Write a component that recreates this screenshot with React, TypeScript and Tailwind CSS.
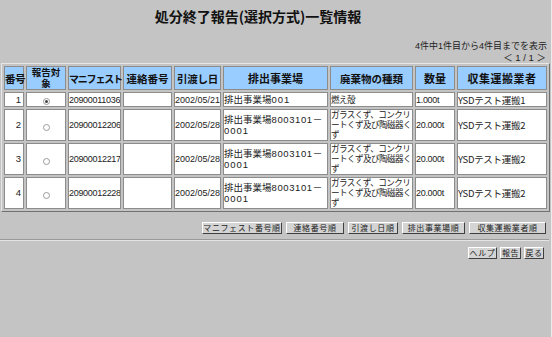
import React from 'react';

const jp = { fontFamily: '"Noto Sans CJK JP", "Liberation Sans", sans-serif' };
// Liberation first keeps the line box compact for stacked multi-line cells
const lat = { fontFamily: '"Liberation Sans", "Noto Sans CJK JP", sans-serif' };
const num = { fontFamily: '"Liberation Sans", Arial, sans-serif' };

type Row = {
  no: number;
  checked: boolean;
  manifest: string;
  date: string;
  site: React.ReactNode;
  waste: string[];
  qty: string;
  carrier: string;
};

const glass = ['ガラスくず、コンクリ', 'ートくず及び陶磁器く', 'ず'];
const siteLong = (
  <>
    <div>
      排出事業場<span className="tracking-[0.6px]">8003101</span>－
    </div>
    <div className="tracking-[1px]">0001</div>
  </>
);

const rows: Row[] = [
  {
    no: 1,
    checked: true,
    manifest: '20900011036',
    date: '2002/05/21',
    site: (
      <>
        排出事業場<span className="tracking-[1px]">001</span>
      </>
    ),
    waste: ['燃え殻'],
    qty: '1.000t',
    carrier: 'YSDテスト運搬1',
  },
  { no: 2, checked: false, manifest: '20900012206', date: '2002/05/28', site: siteLong, waste: glass, qty: '20.000t', carrier: 'YSDテスト運搬2' },
  { no: 3, checked: false, manifest: '20900012217', date: '2002/05/28', site: siteLong, waste: glass, qty: '20.000t', carrier: 'YSDテスト運搬2' },
  { no: 4, checked: false, manifest: '20900012228', date: '2002/05/28', site: siteLong, waste: glass, qty: '20.000t', carrier: 'YSDテスト運搬2' },
];

const headers = [
  { label: '番号', w: 'w-[20px]', t: 'text-[10.5px] tracking-[-0.5px]' },
  { label: '報告対象', w: 'w-[40px]', t: 'text-[9.5px]' },
  { label: 'マニフェスト', w: 'w-[53px]', t: 'text-[10px] tracking-[-1.2px]' },
  { label: '連絡番号', w: 'w-[49px]', t: 'text-[10.5px]' },
  { label: '引渡し日', w: 'w-[47px]', t: 'text-[10.5px] tracking-[-0.3px]' },
  { label: '排出事業場', w: 'w-[105px]', t: 'text-[11px]' },
  { label: '廃棄物の種類', w: 'w-[83px]', t: 'text-[10.5px]' },
  { label: '数量', w: 'w-[40px]', t: 'text-[11px]' },
  { label: '収集運搬業者', w: 'w-[90px]', t: 'text-[11px] tracking-[0.5px]' },
];

function Radio({ checked }: { checked: boolean }) {
  return (
    <span className="inline-flex w-[7px] h-[7px] rounded-full border border-[#9a9a9a] bg-white items-center justify-center align-middle">
      {checked && <span className="w-[3px] h-[3px] rounded-full bg-[#444]" />}
    </span>
  );
}

function Btn({ label, w }: { label: string; w: string }) {
  return (
    <button
      className={`${w} h-[12px] bg-[#d4d4d4] border border-t-white border-l-white border-b-[#404040] border-r-[#404040] text-[8px] leading-[10px] tracking-[0.6px] text-[#222] flex items-center justify-center whitespace-nowrap`}
      style={jp}
    >
      {label}
    </button>
  );
}

// base cell style: no font size / leading here, each cell sets its own
const td = 'border border-[#8c8c8c] bg-white p-0 align-middle text-[#222] overflow-hidden';

export default function App() {
  return (
    <div className="w-[552px] h-[337px] bg-[#c4c4c4] border-r border-[#ececec] overflow-hidden" style={jp}>
      {/* Title */}
      <div className="pt-[8px] pr-[35px] flex justify-center">
        <h1 className="text-[14px] leading-[16px] font-bold text-[#111]">処分終了報告(選択方式)一覧情報</h1>
      </div>

      {/* Count / paging */}
      <div className="mt-[17px] pr-[4px] text-right text-[9px] leading-[11px] text-[#222]" style={lat}>
        <div>4件中1件目から4件目までを表示</div>
        <div className="text-[9.5px] pr-[1px] whitespace-pre">＜ 1 / 1 ＞</div>
      </div>

      {/* Table */}
      <table className="w-[549px] ml-[1px] table-fixed border-separate border-spacing-[2px] border border-t-[#e6e6e6] border-l-[#e6e6e6] border-b-[#707070] border-r-[#707070]">
        <thead>
          <tr className="h-[23px]">
            {headers.map((h) => (
              <th
                key={h.label}
                className={`${h.w} ${h.t} border border-[#8c8c8c] bg-[#99ccff] p-0 leading-[11px] font-bold text-[#111] text-center align-middle whitespace-nowrap`}
                style={h.label === '報告対象' ? lat : jp}
              >
                {h.label === '報告対象' ? (
                  <>
                    報告対
                    <br />象
                  </>
                ) : (
                  h.label
                )}
              </th>
            ))}
          </tr>
        </thead>
        <tbody>
          {rows.map((r) => (
            <tr key={r.no} className={r.no === 1 ? 'h-[15px]' : 'h-[32px]'}>
              <td className={`${td} text-[9.5px] leading-[10px] text-right pr-[2px]`} style={num}>
                {r.no}
              </td>
              <td className={`${td} leading-[10px] text-center`}>
                <Radio checked={r.checked} />
              </td>
              <td className={`${td} text-[9px] leading-[10px] tracking-[-0.3px] whitespace-nowrap`} style={num}>
                {r.manifest}
              </td>
              <td className={td} />
              <td className={`${td} text-[9px] leading-[10px] whitespace-nowrap`} style={num}>
                {r.date}
              </td>
              <td className={`${td} text-[9.5px] leading-[11px] whitespace-nowrap`} style={lat}>
                {r.site}
              </td>
              <td className={`${td} text-[8.6px] leading-[10px] whitespace-nowrap tracking-[-0.6px]`} style={lat}>
                {r.waste.map((l, i) => (
                  <div key={i}>{l}</div>
                ))}
              </td>
              <td className={`${td} text-[9px] leading-[10px] tracking-[-0.3px] whitespace-nowrap`} style={num}>
                {r.qty}
              </td>
              <td className={`${td} text-[9.5px] leading-[10px] whitespace-nowrap tracking-[-0.3px]`}>{r.carrier}</td>
            </tr>
          ))}
        </tbody>
      </table>

      {/* Sort buttons */}
      <div className="mt-[10px] pr-[5px] flex justify-end gap-[4px]">
        <Btn label="マニフェスト番号順" w="w-[80px]" />
        <Btn label="連絡番号順" w="w-[58px]" />
        <Btn label="引渡し日順" w="w-[50px]" />
        <Btn label="排出事業場順" w="w-[63px]" />
        <Btn label="収集運搬業者順" w="w-[77px]" />
      </div>

      {/* Separator */}
      <div className="mt-[5px] mr-[2px] h-[2px] border-t border-t-[#9a9a9a] border-b border-b-[#e4e4e4]" />

      {/* Action buttons */}
      <div className="mt-[6px] pr-[7px] flex justify-end gap-[3px]">
        <Btn label="ヘルプ" w="w-[29px]" />
        <Btn label="報告" w="w-[21px]" />
        <Btn label="戻る" w="w-[20px]" />
      </div>
    </div>
  );
}
